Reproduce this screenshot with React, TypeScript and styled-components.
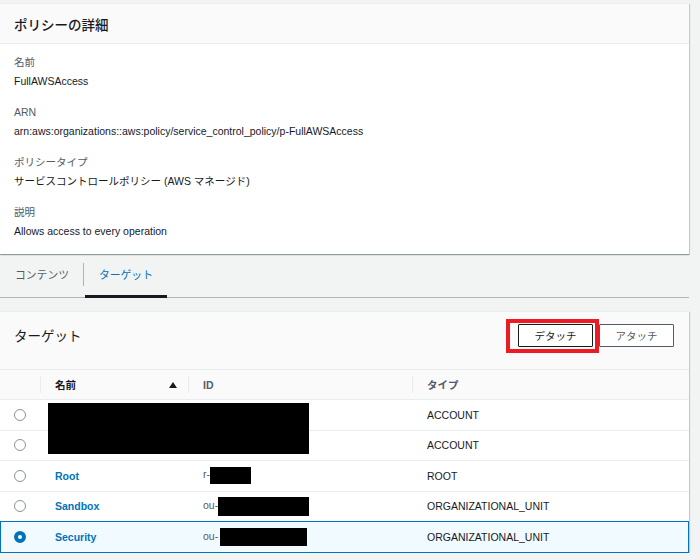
import React, { FC } from 'react'
import styled, { createGlobalStyle, css } from 'styled-components'

const GlobalStyle = createGlobalStyle`
    html, body {
        margin: 0;
        background: #f2f3f3;
        font-family: "Liberation Sans", "Noto Sans CJK JP", sans-serif;
        font-size: 10.5px;
        color: #16191f;
    }
`;

const Page = styled.div`
    padding: 3px 11px 0 0;
`;

const Panel = styled.section`
    background: #ffffff;
    border-top: 1px solid #eaeded;
    box-shadow: 0 1px 1px 0 rgba(0, 28, 36, 0.3), 1px 1px 1px 0 rgba(0, 28, 36, 0.15);
`;

const PanelHeader = styled.header<{ $tall?: boolean }>`
    display: flex;
    align-items: center;
    justify-content: space-between;
    background: #fafafa;
    border-bottom: 1px solid #eaeded;
    padding: ${p => p.$tall ? '11px 15px 22px 14px' : '0 14px'};
    height: ${p => p.$tall ? '24px' : '39px'};
`;

const PanelTitle = styled.h2<{ $strong?: boolean }>`
    margin: 0;
    font-size: 13.5px;
    font-weight: ${p => p.$strong ? 500 : 400};
    color: #16191f;
`;

const DetailBody = styled.div`
    padding: 9px 14px 13px;
    display: flex;
    flex-direction: column;
    gap: 12px;
`;

const Field = styled.div`
    line-height: 19px;
`;

const FieldLabel = styled.div`
    color: #545b64;
`;

const FieldValue = styled.div`
    color: #16191f;
`;

const TabBar = styled.nav`
    display: flex;
    align-items: stretch;
    height: 43px;
    border-bottom: 1px solid #aab7b8;
`;

const Tab = styled.div<{ $active?: boolean }>`
    position: relative;
    display: flex;
    align-items: center;
    padding: 0 14px 3px 15px;
    font-size: 10.8px;
    color: ${p => p.$active ? '#0073bb' : '#545b64'};
    ${p => p.$active && css`
        &::after {
            content: '';
            position: absolute;
            left: 1px;
            right: 0;
            bottom: -1px;
            height: 3px;
            background: #16191f;
        }
    `}
`;

const TabDivider = styled.div`
    align-self: center;
    width: 1px;
    height: 23px;
    margin-bottom: 2px;
    background: #aab7b8;
`;

const TargetPanel = styled(Panel)`
    margin-top: 13px;
`;

const Actions = styled.div`
    display: flex;
    gap: 6px;
`;

const Button = styled.button<{ $primary?: boolean }>`
    width: 75px;
    height: 23px;
    padding: 0;
    background: #ffffff;
    border: 1px solid ${p => p.$primary ? '#16191f' : '#545b64'};
    border-radius: 1px;
    font-family: inherit;
    font-size: 10.5px;
    color: ${p => p.$primary ? '#16191f' : '#545b64'};
`;

const Marked = styled.div`
    position: relative;
`;

const Highlight = styled.div`
    position: absolute;
    top: -5px;
    left: -12px;
    right: -6px;
    bottom: -6px;
    border: 4px solid #ec1c24;
    pointer-events: none;
`;

const Row = styled.div<{ $selected?: boolean }>`
    position: relative;
    display: grid;
    grid-template-columns: 40px 148px 224px 1fr;
    align-items: center;
    height: 29.5px;
    border-bottom: 1px solid #eaeded;
    ${p => p.$selected && css`
        margin-top: -1px;
        background: #f1faff;
        border: 1px solid #0073bb;
        grid-template-columns: 39px 148px 224px 1fr;
    `}
`;

const HeadRow = styled(Row)`
    height: 29px;
    background: #fafafa;
`;

const HeadCell = styled.div<{ $sorted?: boolean }>`
    position: relative;
    display: flex;
    align-items: center;
    justify-content: space-between;
    height: 100%;
    padding: 0 11px 0 15px;
    font-weight: 700;
    color: ${p => p.$sorted ? '#16191f' : '#545b64'};
    &::before {
        content: '';
        position: absolute;
        left: 0;
        top: 6px;
        bottom: 6px;
        width: 1px;
        background: #eaeded;
    }
`;

const RadioCell = styled.div`
    display: flex;
    justify-content: center;
    padding-right: 1px;
`;

const Radio = styled.span<{ $checked?: boolean }>`
    box-sizing: border-box;
    width: 12px;
    height: 12px;
    border-radius: 50%;
    background: #ffffff;
    border: ${p => p.$checked ? '4px solid #0073bb' : '1px solid #879596'};
`;

const Cell = styled.div`
    padding: 0 15px;
    white-space: nowrap;
    color: #16191f;
`;

const NameLink = styled.a`
    color: #0073bb;
    font-weight: 700;
    text-decoration: none;
`;

const IdPrefix = styled.span`
    color: #545b64;
`;

const Redaction = styled.span<{ $w: number; $h: number; $ml?: number }>`
    display: inline-block;
    vertical-align: middle;
    width: ${p => p.$w}px;
    height: ${p => p.$h}px;
    margin-left: ${p => p.$ml ?? 0}px;
    background: #000000;
`;

const Rows = styled.div`
    position: relative;
`;

const RedactionBlock = styled.div`
    position: absolute;
    left: 48px;
    top: 3px;
    width: 261px;
    height: 51px;
    background: #000000;
`;

const SortArrow: FC = () => (
    <svg width="8" height="6" viewBox="0 0 8 6">
        <path d="M0 6 L4 0 L8 6 Z" fill="#16191f" />
    </svg>
)

type Target = {
    name?: string
    prefix?: string
    redact?: { w: number; h: number; ml?: number }
    type: string
    selected?: boolean
}

const targets: Target[] = [
    { type: 'ACCOUNT' },
    { type: 'ACCOUNT' },
    { name: 'Root', prefix: 'r-', redact: { w: 41, h: 17 }, type: 'ROOT' },
    { name: 'Sandbox', prefix: 'ou-', redact: { w: 91, h: 19 }, type: 'ORGANIZATIONAL_UNIT' },
    { name: 'Security', prefix: 'ou-', redact: { w: 87, h: 18, ml: 2 }, type: 'ORGANIZATIONAL_UNIT', selected: true },
]

const details = [
    { label: '名前', value: 'FullAWSAccess' },
    { label: 'ARN', value: 'arn:aws:organizations::aws:policy/service_control_policy/p-FullAWSAccess' },
    { label: 'ポリシータイプ', value: 'サービスコントロールポリシー (AWS マネージド)' },
    { label: '説明', value: 'Allows access to every operation' },
]

export default function App() {
    return (
        <Page>
            <GlobalStyle />
            <Panel>
                <PanelHeader>
                    <PanelTitle $strong>ポリシーの詳細</PanelTitle>
                </PanelHeader>
                <DetailBody>
                    {details.map(d => (
                        <Field key={d.label}>
                            <FieldLabel>{d.label}</FieldLabel>
                            <FieldValue>{d.value}</FieldValue>
                        </Field>
                    ))}
                </DetailBody>
            </Panel>

            <TabBar>
                <Tab>コンテンツ</Tab>
                <TabDivider />
                <Tab $active>ターゲット</Tab>
            </TabBar>

            <TargetPanel>
                <PanelHeader $tall>
                    <PanelTitle>ターゲット</PanelTitle>
                    <Actions>
                        <Marked>
                            <Button $primary>デタッチ</Button>
                            <Highlight />
                        </Marked>
                        <Button>アタッチ</Button>
                    </Actions>
                </PanelHeader>
                <HeadRow>
                    <div />
                    <HeadCell $sorted>名前<SortArrow /></HeadCell>
                    <HeadCell>ID</HeadCell>
                    <HeadCell>タイプ</HeadCell>
                </HeadRow>
                <Rows>
                    {targets.map((t, i) => (
                        <Row key={i} $selected={t.selected}>
                            <RadioCell><Radio $checked={t.selected} /></RadioCell>
                            <Cell>{t.name && <NameLink>{t.name}</NameLink>}</Cell>
                            <Cell>
                                {t.prefix && <IdPrefix>{t.prefix}</IdPrefix>}
                                {t.redact && <Redaction $w={t.redact.w} $h={t.redact.h} $ml={t.redact.ml} />}
                            </Cell>
                            <Cell>{t.type}</Cell>
                        </Row>
                    ))}
                    <RedactionBlock />
                </Rows>
            </TargetPanel>
        </Page>
    )
}
